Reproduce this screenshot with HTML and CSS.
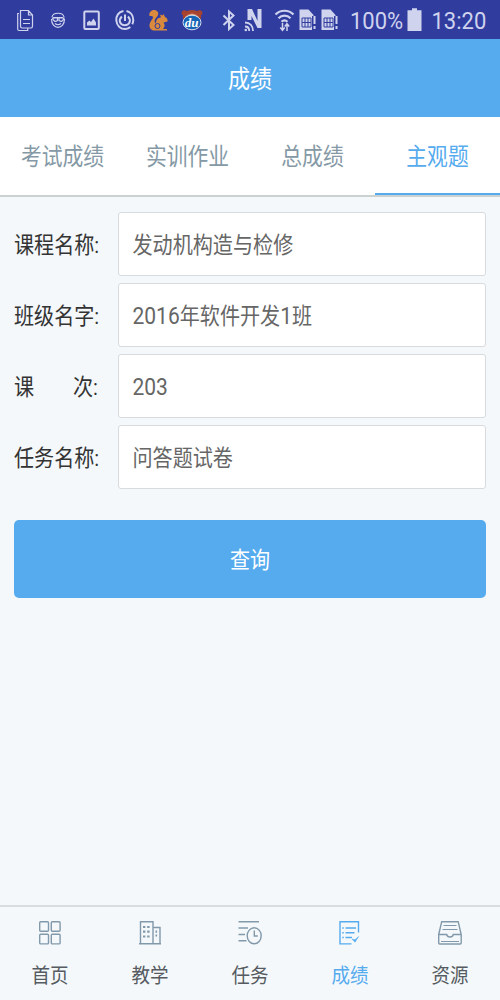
FILE: index.html
```
<!DOCTYPE html>
<html lang="zh-CN">
<head>
<meta charset="utf-8">
<title>成绩</title>
<link rel="stylesheet" href="styles.css">
</head>
<body>
<div class="app">
  <div class="status">
    <svg class="s-copy" viewBox="16 8 18 24"><path d="M19 13.5h-1.300v15.500q0 1.500 1.500 1.500h8.500v-2M20.500 10.500h8l4 4.500v11q0 2-1.500 2h-9q-1.500 0-1.500-2zM28.500 10.500v4.500h4M23 19.500h7M23 23.500h7"/></svg>
    <svg class="s-face" viewBox="50 8 16 24"><path d="M51.500 19c0 5 3 8.300 6.500 8.300s6.500-3.300 6.500-8.300M52 17c1-5 11-5 12 0M53 17.500h10M55 23.500q3 2.500 6 0"/><path d="M52.500 18h5v2.500q-3.500 2.500-5-2.500zM59 18h5q-1.500 5-5 2.500z"/></svg>
    <svg class="s-img" viewBox="83 8 17 24"><rect x="84.300" y="11.500" width="14.500" height="17.500" rx="1" stroke-width="2"/><path class="fill" d="M87 25.500v-3l2.500-2 1.500 1.500 2.500-3.500 2.500 4v3z"/></svg>
    <svg class="s-ring" viewBox="115 8 20 24"><path stroke-width="2" d="M123.500 11c-5 .8-7.500 5-7.200 9.500.5 5.500 4.500 8.700 9.200 8.500 2-.1 3.500-.8 4.800-2M126.500 11c4 .8 6.700 4.500 6.800 9 0 1.500-.4 3-1 4.200M121.800 16.500c-4 4-1.500 8.700 3 8.700 4.500 0 7-4.700 3.200-8.700M125 14.500v6.500"/></svg>
    <svg class="s-uc" viewBox="148 8 20 24"><path class="uc" d="M149.500 16c-1-4 3-7 6.500-5.500 4 2 2 5.500-.5 8-1.500 2-1 4 .5 5 0-4 2-6 5-6l-1-3 2.500 1 1-1.500 1.500 3c2 1 3 2.500 2.500 4.500l-4 1c2 3 1 4.500-.5 6.500h4v1.500h-14c-5-2-4-7.500-1-11 2-2.500 1-4-2.500-3.500z"/><circle class="uc-eye" cx="157.500" cy="26" r="2.500"/></svg>
    <svg class="s-du" viewBox="181 8 22 24"><circle class="bear" cx="184.500" cy="13" r="2.800"/><circle class="bear" cx="199.500" cy="13" r="2.800"/><ellipse class="bear" cx="192" cy="16.500" rx="9.300" ry="6.500"/><path class="snout" d="M185 17q7-7 14 0z"/><ellipse class="badge" cx="192" cy="22.500" rx="9" ry="7.300"/><text class="du" x="191.500" y="27" text-anchor="middle">du</text></svg>
    <svg class="s-bt" viewBox="222 8 14 24"><path stroke-width="2" d="M223.500 15.500l10 9.500-4.500 4V11.500l4.500 4-10 9.500"/></svg>
    <svg class="s-nfc" viewBox="244 8 19 24"><path class="fill" d="M247.500 9h4.500l5.500 12V9h4v19h-4l-6-12v4h-4z"/><path stroke-width="1.800" d="M245 22.500c5 0 8 3.500 8 8.500M245 26.500c2.500 0 4.200 1.800 4.200 4.500"/><circle class="fill" cx="245.800" cy="30" r="1.300"/></svg>
    <svg class="s-wifi" viewBox="274 8 21 24"><path stroke-width="2.200" d="M275.500 14.500c5-5 13-5 18 0M278.500 18.300c3.500-3.700 8.500-3.700 12 0M281.500 21.800c2-2 4-2 6 0"/><path stroke-width="1.500" d="M282.500 23v7M280.300 27.500l2.200 2.700 2.200-2.700M287 31v-7M284.800 26.500l2.200-2.700 2.200 2.700"/></svg>
    <svg class="s-sim" viewBox="299 8 17 24"><path class="fill" d="M299.500 9.500h9l5 5.500v1h-1.500v14h-12.500z"/><path class="cut" d="M302 18h9v9h-9zM305 18v9M308 18v9M302 22.500h9"/><path class="fill" d="M313.500 16h2v8h-2zM313.500 26h2v3h-2z"/></svg>
    <svg class="s-sim2" viewBox="299 8 17 24"><path class="fill" d="M299.500 9.500h9l5 5.500v1h-1.500v14h-12.500z"/><path class="cut" d="M302 18h9v9h-9zM305 18v9M308 18v9M302 22.500h9"/><path class="fill" d="M313.500 16h2v8h-2zM313.500 26h2v3h-2z"/></svg>
    <span class="percent">100%</span>
    <svg class="s-bat" viewBox="407 8 15 24"><path class="fill" d="M412 8.300h5v2h4.500v20.700h-14v-20.700h4.500z"/></svg>
    <span class="clock">13:20</span>
  </div>
  <header class="title"><span class="t">成绩</span></header>
  <div class="tabs">
    <div class="tab"><span class="t">考试成绩</span></div>
    <div class="tab"><span class="t">实训作业</span></div>
    <div class="tab"><span class="t">总成绩</span></div>
    <div class="tab active"><span class="t">主观题</span></div>
  </div>
  <main class="form">
    <div class="row"><span class="label t">课程名称:</span><div class="field"><span class="t">发动机构造与检修</span></div></div>
    <div class="row"><span class="label t">班级名字:</span><div class="field"><span class="t"><span class="num">2016</span>年软件开发<span class="num">1</span>班</span></div></div>
    <div class="row"><span class="label spread t"><span>课</span><span>次:</span></span><div class="field"><span class="t"><span class="num">203</span></span></div></div>
    <div class="row"><span class="label t">任务名称:</span><div class="field"><span class="t">问答题试卷</span></div></div>
    <div class="query"><span class="t">查询</span></div>
  </main>
  <nav class="nav">
    <div class="item"><svg viewBox="36 919 28 28"><rect x="39.700" y="921.700" width="8.800" height="9.600" rx="1"/><rect x="51.300" y="921.700" width="8.800" height="9.600" rx="1"/><rect x="39.700" y="934.300" width="8.800" height="9.600" rx="1"/><rect x="51.300" y="934.300" width="8.800" height="9.600" rx="1"/></svg><span class="t">首页</span></div>
    <div class="item"><svg viewBox="136 919 28 28"><path d="M139 943.700h22M140.500 943.700v-22h12.500v22M153 927.500h7v16.200"/><path class="dots" d="M143 927h2.400M147.200 927h2.400M143 931.700h2.400M147.200 931.700h2.400M143 936.500h2.400M147.200 936.500h2.400M155.500 931.700h1.600M155.500 935.500h1.600"/></svg><span class="t">教学</span></div>
    <div class="item"><svg viewBox="236 919 28 28"><path d="M238.500 921.800h20.500M238.500 928h9.500M238.500 934.500h6.500M238.500 940.700h8M254.300 930.500v5.500h3.500"/><ellipse cx="254.200" cy="935.800" rx="7" ry="8"/></svg><span class="t">任务</span></div>
    <div class="item active"><svg viewBox="336 919 28 28"><path d="M358.500 932.500v-10.800h-18.500v22.200h11.500M345.500 928h10.500M345.500 932.800h9M345.500 937.500h6.500M342.300 928h1.500M342.300 932.800h1.500M342.300 937.500h1.500"/><path class="check" d="M352 939l3 3.200 3.700-5.700-3.700 3.200z"/></svg><span class="t">成绩</span></div>
    <div class="item"><svg viewBox="436 919 28 28"><path d="M438.700 934.500l3-12.800h16.500l3 12.800v8.500q0 1-1 1h-20.500q-1 0-1-1zM438.700 934.500h8q.5 2.500 3.300 2.500t3.300-2.500h8"/><path class="thin" d="M443.500 925.500h13M442.500 929.500h15M441 941.500h18"/></svg><span class="t">资源</span></div>
  </nav>
</div>
</body>
</html>
```
FILE: styles.css
```
* { box-sizing: border-box; }
body { margin: 0; font-family: Roboto, "Noto Sans CJK SC", sans-serif; }
.app { width: 500px; height: 1000px; display: flex; flex-direction: column; background: #f4f8fb; overflow: hidden; }
svg { display: block; flex: none; fill: none; }
.t { display: inline-block; white-space: nowrap; line-height: 24px; transform: translateY(1.5px) scaleY(1.125); }

.status { height: 39px; flex: none; display: flex; align-items: flex-start; padding: 8px 0 0 16px; background: #303d9f; color: #cfd3ee; }
.status svg { height: 24px; stroke: #cfd3ee; stroke-width: 1.2; }
.status .fill { fill: #cfd3ee; stroke: none; }
.s-copy { width: 18px; }
.s-face { width: 16px; margin-left: 16px; }
.s-img { width: 17px; margin-left: 17px; }
.s-ring { width: 20px; margin-left: 15px; }
.s-uc { width: 20px; margin-left: 13px; }
.s-du { width: 22px; margin-left: 13px; }
.s-bt { width: 14px; margin-left: 19px; }
.s-nfc { width: 19px; margin-left: 8px; }
.s-wifi { width: 21px; margin-left: 11px; }
.s-sim { width: 17px; margin-left: 4px; }
.s-sim2 { width: 17px; margin-left: 5px; }
.s-bat { width: 15px; }
.status .uc { fill: #d98a3d; stroke: none; }
.status .uc-eye { stroke: #303d9f; stroke-width: 1; }
.status .bear { fill: #a8432f; stroke: none; }
.status .snout { fill: #d9a27c; stroke: none; }
.status .badge { fill: #1765b5; stroke: #d5dcf0; stroke-width: 1; }
.status .du { font: italic bold 13px "Liberation Serif", serif; fill: #fff; stroke: none; }
.status .cut { stroke: #303d9f; stroke-width: 1; }
.percent, .clock { font-size: 22px; line-height: 26px; white-space: nowrap; transform: scaleY(1.09); }
.percent { width: 57px; margin-left: 12px; }
.clock { margin-left: 9.5px; }

.title { height: 78px; flex: none; display: flex; align-items: center; justify-content: center; padding-top: 2px; background: #55abee; color: #fff; font-size: 22px; }
.tabs { height: 80px; flex: none; display: flex; background: #fff; border-bottom: 2px solid #ccd0d1; }
.tab { flex: 1; height: 78px; display: flex; align-items: center; justify-content: center; color: #8499a5; font-size: 20.8px; }
.tab.active { padding-top: 2px; color: #55abee; border-bottom: 2px solid #55abee; }

.form { flex: 1; padding: 15px 14px 0; }
.row { display: flex; align-items: center; height: 64px; margin-bottom: 7px; font-size: 20.1px; }
.label { width: 104px; color: #333; }
.spread { display: flex; justify-content: space-between; padding-right: 20px; }
.field { flex: 1; height: 64px; display: flex; align-items: center; padding-left: 13.5px; background: #fff; border: 1px solid #d8dbdd; border-radius: 3px; color: #666; }
.num { font-size: 21px; }
.query { height: 78px; margin-top: 31px; display: flex; align-items: center; justify-content: center; background: #55abee; border-radius: 5px; color: #fff; font-size: 20px; }

.nav { height: 95px; flex: none; display: flex; border-top: 2px solid #d9dde0; }
.item { flex: 1; display: flex; flex-direction: column; align-items: center; padding-top: 12px; color: #555b60; font-size: 18.500px; }
.item svg { width: 28px; height: 28px; stroke: #8199aa; stroke-width: 1.4; margin-bottom: 16px; }
.item .dots { stroke-width: 2.200; }
.item .thin { stroke-width: 1; }
.item.active { color: #55abee; }
.item.active svg { stroke: #55abee; }
.item .check { fill: #55abee; stroke-width: .5; }
```
